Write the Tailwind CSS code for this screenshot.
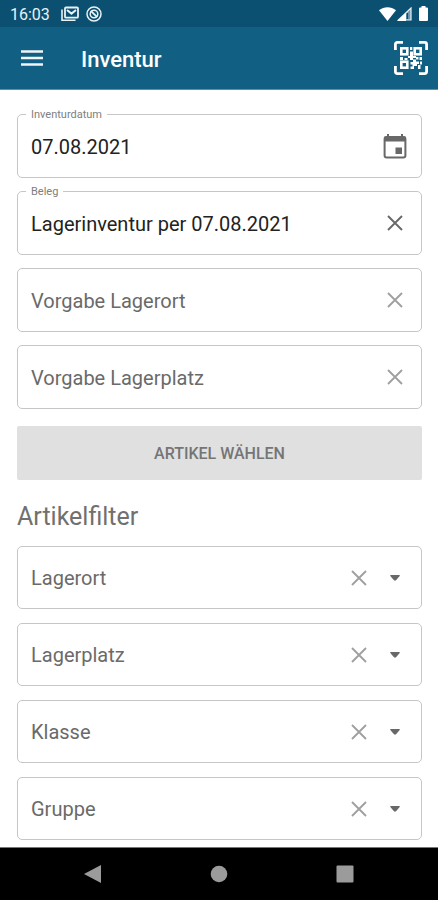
<!DOCTYPE html>
<html lang="de">
<head>
<meta charset="utf-8">
<meta name="viewport" content="width=device-width, initial-scale=1">
<title>Inventur</title>
<script src="https://cdn.jsdelivr.net/npm/@tailwindcss/browser@4"></script>
</head>
<body class="flex min-h-screen flex-col bg-white font-[Roboto,sans-serif] text-[20px] text-[#222]">

<svg class="hidden" aria-hidden="true">
  <symbol id="clear" viewBox="0 0 16 16"><path d="M1 1L15 15M15 1L1 15" fill="none" stroke="currentColor" stroke-width="1.9"/></symbol>
  <symbol id="caret" viewBox="0 0 10 6"><path d="M.3 0H9.7V1L5.8 5.5H4.2L.3 1Z" fill="currentColor"/></symbol>
</svg>

<div class="flex h-[27px] items-center justify-between bg-[#0b5070] pr-2 pl-[10px] text-white">
  <div class="flex items-center">
    <span class="pt-[2px] text-[16px] leading-[25px] text-[#e9f1f5]">16:03</span>
    <svg class="ml-[11px] h-4 w-[18px]" viewBox="0 0 18 16" fill="none" stroke="#e9f1f5">
      <path d="M1 3.5V14.2H14.5" stroke-width="1.6"/>
      <rect x="4" y="1.5" width="13" height="10.2" rx="1" stroke-width="1.8"/>
      <path d="M6 4L10.5 7.600L15 4" stroke-width="2"/>
    </svg>
    <svg class="ml-[7px] h-4 w-4" viewBox="0 0 16 16" fill="none" stroke="#e9f1f5">
      <circle cx="8" cy="8" r="7" stroke-width="1.5"/>
      <circle cx="8" cy="8" r="3.800" stroke-width="1.500"/>
      <path d="M4.800 4.800L11.200 11.200" stroke-width="1.900"/>
    </svg>
  </div>
  <div class="flex items-center">
    <svg class="h-[14px] w-[17px]" viewBox="0 0 17 14"><path d="M0 3.2C5 -.8 12 -.8 17 3.2L8.5 14Z" fill="#fff"/></svg>
    <svg class="ml-px h-[14px] w-[15px]" viewBox="0 0 15 14"><path d="M14 1V13H1.5Z" fill="#6f9bb0" stroke="#e9f1f5" stroke-width="1.2"/><path d="M9 5.8V14H0Z" fill="#fff"/><path d="M10.4 6V12" stroke="#0b5070" stroke-width="1.4"/></svg>
    <svg class="ml-[7px] mr-[2px] h-[15px] w-[9px]" viewBox="0 0 9 15"><path d="M2.5 0H6.5V1.5H8Q9 1.5 9 2.5V14Q9 15 8 15H1Q0 15 0 14V2.5Q0 1.5 1 1.5H2.5Z" fill="#fff"/></svg>
  </div>
</div>

<header class="flex h-[63px] items-center border-b border-[#5f8ea6] bg-[#125f84] pr-[10px] pl-[21px] text-white">
  <button type="button" aria-label="Menü">
    <svg class="h-4 w-[22px]" viewBox="0 0 22 16"><path d="M0 1.5H22M0 8H22M0 14.5H22" stroke="#f0f5f8" stroke-width="2.4"/></svg>
  </button>
  <h1 class="ml-[38px] flex-1 pt-1 text-[22px] leading-7 font-medium">Inventur</h1>
  <button type="button" aria-label="QR-Code scannen">
    <svg class="h-[34px] w-[34px]" viewBox="0 0 34 34" fill="none" stroke="#fff">
      <path d="M1.4 9V3.4Q1.4 1.4 3.4 1.4H9M25 1.4H30.6Q32.6 1.4 32.6 3.4V9M32.6 25V30.6Q32.6 32.6 30.6 32.6H25M9 32.6H3.4Q1.4 32.6 1.4 30.6V25" stroke-width="2.8"/>
      <g stroke-width="2.6"><rect x="7.3" y="7.3" width="6" height="6"/><rect x="20.7" y="7.3" width="6" height="6"/><rect x="7.3" y="20.7" width="6" height="6"/></g>
      <path d="M16 6h2.3v3H16zM16 10.500h3v4.500h3v2h-3v2h-3v-2h-2v-2h2zM6 16h3v3H6zM10.500 17h3v2h-3zM22 16h2.500v2.500H22zM25.500 16h2.500v3h-2.500zM19 18.500h3v2h3v2.500h-2v2h-3v3h-3.500v-2.500h2v-2h-2v-2.500h2.500zM26 20.500h2v3h-2zM24 24h2.500v4H24z" fill="#fff" stroke="none"/>
    </svg>
  </button>
</header>

<main class="flex-1 pt-6 pr-4 pb-[7px] pl-[17px]">
  <form>
    <div class="flex flex-col gap-[13px]">
      <div class="relative flex h-16 items-center rounded-[5px] border border-[#c6c6c6] pr-[14px]">
        <label for="datum" class="absolute -top-2 left-2 bg-white px-[5px] text-[11px] leading-4 text-[#808080]">Inventurdatum</label>
        <input id="datum" type="text" value="07.08.2021" class="h-full min-w-0 flex-1 bg-transparent pt-[2px] pl-[13px] outline-none">
        <button type="button" aria-label="Datum wählen" class="text-[#686868]">
          <svg class="h-[25px] w-6" viewBox="0 0 24 25"><path d="M4 0H6V3H4ZM18 0H20V3H18Z" fill="currentColor"/><rect x="1.600" y="3" width="20.800" height="20.500" rx="2" fill="none" stroke="currentColor" stroke-width="2"/><path d="M1.500 2.500H22.500V7.500H1.500ZM12.500 13.500H19V20H12.500Z" fill="currentColor"/></svg>
        </button>
      </div>
      <div class="relative flex h-16 items-center rounded-[5px] border border-[#c6c6c6] pr-[18px]">
        <label for="beleg" class="absolute -top-2 left-2 bg-white px-[5px] text-[11px] leading-4 text-[#808080]">Beleg</label>
        <input id="beleg" type="text" value="Lagerinventur per 07.08.2021" class="h-full min-w-0 flex-1 bg-transparent pt-[2px] pl-[13px] outline-none">
        <button type="button" aria-label="Beleg löschen" class="text-[#686868]"><svg class="h-4 w-4"><use href="#clear"/></svg></button>
      </div>
      <div class="relative flex h-16 items-center rounded-[5px] border border-[#c6c6c6] pr-[18px]">
        <label for="vort" class="pointer-events-none absolute left-[13px] pt-[2px] text-[#6a6a6a]">Vorgabe Lagerort</label>
        <input id="vort" type="text" class="h-full min-w-0 flex-1 bg-transparent pt-[2px] pl-[13px] outline-none">
        <button type="button" aria-label="Lagerort löschen" class="text-[#a0a0a0]"><svg class="h-4 w-4"><use href="#clear"/></svg></button>
      </div>
      <div class="relative flex h-16 items-center rounded-[5px] border border-[#c6c6c6] pr-[18px]">
        <label for="vplatz" class="pointer-events-none absolute left-[13px] pt-[2px] text-[#6a6a6a]">Vorgabe Lagerplatz</label>
        <input id="vplatz" type="text" class="h-full min-w-0 flex-1 bg-transparent pt-[2px] pl-[13px] outline-none">
        <button type="button" aria-label="Lagerplatz löschen" class="text-[#a0a0a0]"><svg class="h-4 w-4"><use href="#clear"/></svg></button>
      </div>
    </div>

    <button type="button" class="mt-[17px] h-[54px] w-full rounded-[2px] bg-[#e0e0e0] pt-[2px] text-[16px] font-medium text-[#757575]">ARTIKEL WÄHLEN</button>

    <h2 class="mt-[21px] mb-[13px] text-[25px] leading-8 text-[#707070]">Artikelfilter</h2>

    <div class="flex flex-col gap-[14px]">
      <div class="relative flex h-[63px] items-center rounded-[5px] border border-[#c6c6c6]">
        <label for="ort" class="pointer-events-none absolute left-[13px] text-[#6a6a6a]">Lagerort</label>
        <select id="ort" class="h-full w-full appearance-none bg-transparent pl-[13px] outline-none"><option value=""></option></select>
        <button type="button" aria-label="Lagerort zurücksetzen" class="absolute right-[54px] text-[#a0a0a0]"><svg class="h-4 w-4"><use href="#clear"/></svg></button>
        <svg class="pointer-events-none absolute right-[21px] h-[6px] w-[10px] text-[#686868]"><use href="#caret"/></svg>
      </div>
      <div class="relative flex h-[63px] items-center rounded-[5px] border border-[#c6c6c6]">
        <label for="platz" class="pointer-events-none absolute left-[13px] text-[#6a6a6a]">Lagerplatz</label>
        <select id="platz" class="h-full w-full appearance-none bg-transparent pl-[13px] outline-none"><option value=""></option></select>
        <button type="button" aria-label="Lagerplatz zurücksetzen" class="absolute right-[54px] text-[#a0a0a0]"><svg class="h-4 w-4"><use href="#clear"/></svg></button>
        <svg class="pointer-events-none absolute right-[21px] h-[6px] w-[10px] text-[#686868]"><use href="#caret"/></svg>
      </div>
      <div class="relative flex h-[63px] items-center rounded-[5px] border border-[#c6c6c6]">
        <label for="klasse" class="pointer-events-none absolute left-[13px] text-[#6a6a6a]">Klasse</label>
        <select id="klasse" class="h-full w-full appearance-none bg-transparent pl-[13px] outline-none"><option value=""></option></select>
        <button type="button" aria-label="Klasse zurücksetzen" class="absolute right-[54px] text-[#a0a0a0]"><svg class="h-4 w-4"><use href="#clear"/></svg></button>
        <svg class="pointer-events-none absolute right-[21px] h-[6px] w-[10px] text-[#686868]"><use href="#caret"/></svg>
      </div>
      <div class="relative flex h-[63px] items-center rounded-[5px] border border-[#c6c6c6]">
        <label for="gruppe" class="pointer-events-none absolute left-[13px] text-[#6a6a6a]">Gruppe</label>
        <select id="gruppe" class="h-full w-full appearance-none bg-transparent pl-[13px] outline-none"><option value=""></option></select>
        <button type="button" aria-label="Gruppe zurücksetzen" class="absolute right-[54px] text-[#a0a0a0]"><svg class="h-4 w-4"><use href="#clear"/></svg></button>
        <svg class="pointer-events-none absolute right-[21px] h-[6px] w-[10px] text-[#686868]"><use href="#caret"/></svg>
      </div>
    </div>
  </form>
</main>

<nav class="flex h-[53px] items-center justify-center gap-[108px] border-t border-[#777] bg-black text-[#9b9b9b]">
  <button type="button" aria-label="Zurück"><svg class="h-[18px] w-[18px]" viewBox="0 0 18 18"><path d="M17 0V18L0 9Z" fill="currentColor"/></svg></button>
  <button type="button" aria-label="Startbildschirm"><svg class="h-[18px] w-[18px]" viewBox="0 0 18 18"><circle cx="9" cy="9" r="8.300" fill="currentColor"/></svg></button>
  <button type="button" aria-label="Übersicht"><svg class="h-[18px] w-[18px]" viewBox="0 0 18 18"><rect x=".5" y=".5" width="17" height="17" rx="1" fill="currentColor"/></svg></button>
</nav>
</body>
</html>
